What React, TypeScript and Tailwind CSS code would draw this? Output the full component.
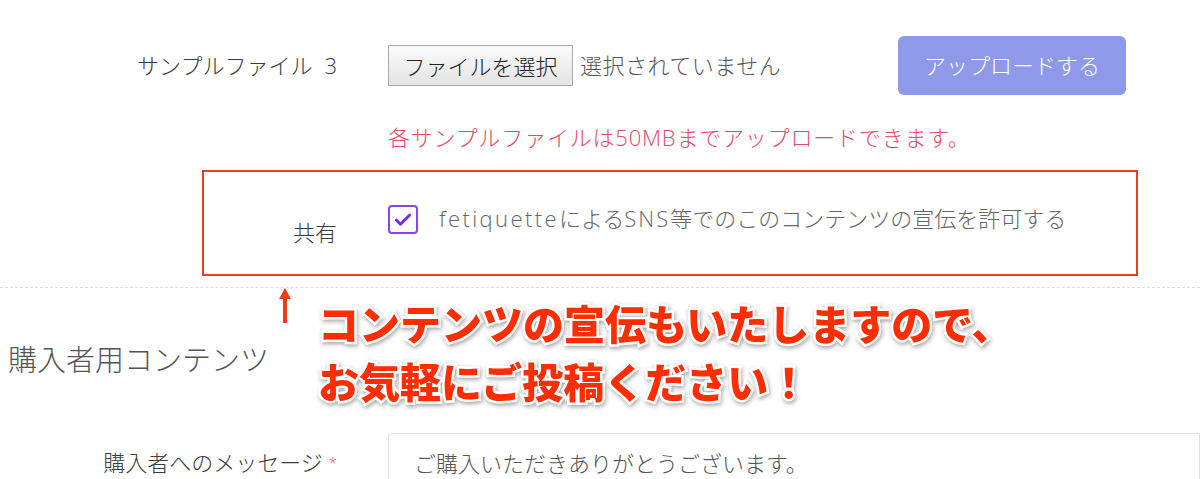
import { Check } from "lucide-react";

export default function App() {
  return (
    <div className="relative w-[1200px] h-[479px] overflow-hidden bg-white font-['Open_Sans','Noto_Sans_CJK_JP',sans-serif] font-light text-[22px]">
      {/* sample file 3 */}
      <div className="flex items-center h-[59px] mt-[36px]">
        <div className="w-[337px] text-right text-[#3c3c3c] whitespace-nowrap">
          サンプルファイル<span className="ml-[12px]">3</span>
        </div>
        <button className="ml-[51px] w-[185px] h-[41px] border border-[#a9a9a9] bg-gradient-to-b from-[#fbfbfb] to-[#e4e4e4] text-[#222] leading-none">
          ファイルを選択
        </button>
        <span className="ml-[7px] text-[#555] tracking-[0.5px]">選択されていません</span>
        <button className="ml-auto mr-[74px] w-[228px] h-[59px] rounded-[6px] bg-[#8e9ae9] text-white">
          アップロードする
        </button>
      </div>

      <p className="mt-[27px] pl-[388px] leading-[30px] text-[#e8486a] whitespace-nowrap tracking-[0.8px]">
        各サンプルファイルは50MBまでアップロードできます。
      </p>

      {/* share row */}
      <div className="mt-[18px] ml-[202px] w-[936px] h-[106px] border-2 border-[#ec3b24] flex items-start">
        <div className="w-[133px] pt-[46px] leading-[28px] text-right text-[#3c3c3c]">共有</div>
        <div className="ml-[51px] mt-[33px] w-[30px] h-[29px] rounded-[4px] border-2 border-[#8a44ee] flex items-center justify-center">
          <Check size={20} strokeWidth={3.5} className="text-[#7a2be0]" />
        </div>
        <span className="ml-[21px] mt-[32px] leading-[28px] text-[#666] whitespace-nowrap">
          <span className="tracking-[2.4px]">fetiquette</span>による<span className="tracking-[2px]">SNS</span>等でのこのコンテンツの宣伝を許可する
        </span>
      </div>

      <div className="mt-[11px] border-t border-dashed border-[#dcdcdc]" />

      <h2 className="mt-[52px] pl-[8px] text-[29px] leading-[40px] text-[#555] whitespace-nowrap">購入者用コンテンツ</h2>

      {/* message */}
      <div className="mt-[53px] flex items-start">
        <div className="w-[337px] pt-[15px] leading-[28px] text-right text-[#3c3c3c] whitespace-nowrap">
          購入者へのメッセージ<span className="ml-[6px] align-top text-[15px] text-[#e8486a]">*</span>
        </div>
        <div className="ml-[51px] flex-1 h-[80px] border border-[#e3e3e3] rounded-tl-[4px] pl-[25px] pt-[15px] leading-[28px] text-[#555] whitespace-nowrap">
          ご購入いただきありがとうございます。
        </div>
      </div>

      {/* annotation */}
      <svg className="absolute left-[278px] top-[287px]" width="14" height="37" viewBox="0 0 14 37">
        <path d="M7 1 L13 12 L9 12 L9 36 L5 36 L5 12 L1 12 Z" fill="#f03a1a" />
      </svg>
      <div className="absolute left-[318px] top-[293px] font-['Noto_Sans_CJK_JP',sans-serif] text-[41px] leading-[58px] font-black text-[#ff2d00] whitespace-nowrap [-webkit-text-stroke:5px_white] [paint-order:stroke_fill] drop-shadow-[1px_2px_2px_rgba(0,0,0,0.35)]">
        <div>コンテンツの宣伝もいたしますので、</div>
        <div>お気軽にご投稿ください！</div>
      </div>
    </div>
  );
}
